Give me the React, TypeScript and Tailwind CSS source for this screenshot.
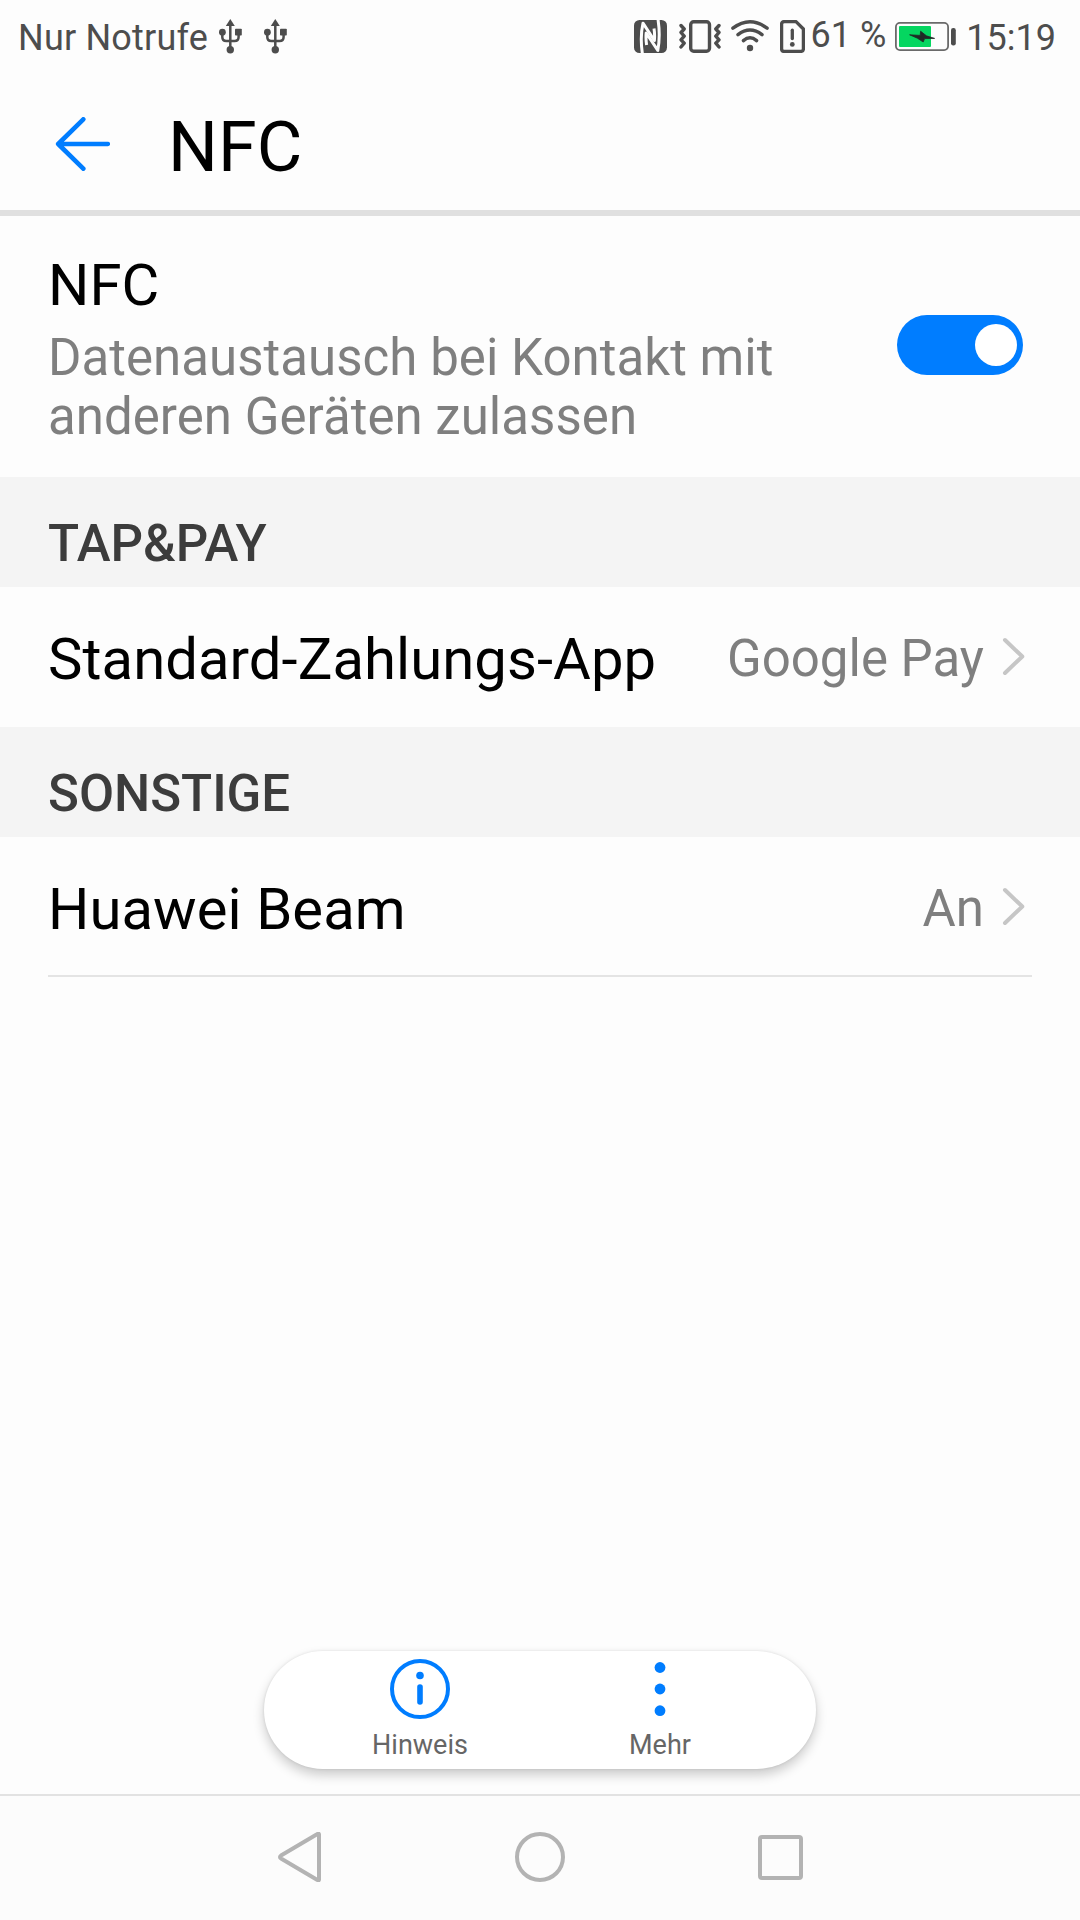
import type { ReactNode } from "react"

const UsbIcon = () => (
  <svg width="23" height="35" viewBox="0 0 23 35" fill="#4d4d4d">
    <path d="M11.3 0 L15.8 7 H6.8 Z" />
    <circle cx="3.4" cy="13.2" r="3.4" />
    <rect x="16" y="9.8" width="6.8" height="6.8" rx="0.8" />
    <circle cx="11.3" cy="30.8" r="3.7" />
    <path d="M11.3 5 V29 M3.3 14 V18 Q3.3 22 7.3 22 H15.6 Q19.6 22 19.6 18 V14" fill="none" stroke="#4d4d4d" strokeWidth="2.5" />
  </svg>
)

const NfcIcon = () => (
  <svg width="33" height="33" viewBox="0 0 33 33">
    <rect width="33" height="33" rx="5.5" fill="#4d4d4d" />
    <path d="M8.6 35 C6.8 24 7 12 9 3.2 L20.4 20.5 C20.8 16 20.6 12 20 8.5" fill="none" stroke="#fdfdfd" strokeWidth="3" strokeLinejoin="round" />
    <path d="M23.8 -2 C25.6 9 25.6 21 23.8 30.4 L12.2 13 C11.8 17 12 21 12.6 25" fill="none" stroke="#fdfdfd" strokeWidth="3" strokeLinejoin="round" />
  </svg>
)

const VibrateIcon = () => (
  <svg width="42" height="33" viewBox="0 0 42 33" fill="none" stroke="#4d4d4d" strokeWidth="3.4" strokeLinecap="round" strokeLinejoin="round">
    <rect x="11.7" y="1.8" width="18.8" height="29.4" rx="3" />
    <path d="M2 5.5 L5.2 9 L2 12.5 L5.2 16.2 L2 19.8 L5.2 23.2 L2 27" />
    <path d="M40 5.5 L36.8 9 L40 12.5 L36.8 16.2 L40 19.8 L36.8 23.2 L40 27" />
  </svg>
)

const WifiIcon = () => (
  <svg width="38" height="33" viewBox="0 0 38 33" fill="none" stroke="#4d4d4d" strokeWidth="3.5" strokeLinecap="round">
    <path d="M1.9 8.2 Q19 -4.6 36.1 8.2" />
    <path d="M7 14.6 Q19 5.4 31 14.6" />
    <path d="M12.4 20.6 Q19 15 25.6 20.6" />
    <circle cx="19" cy="28" r="3.2" fill="#4d4d4d" stroke="none" />
  </svg>
)

const SimAlertIcon = () => (
  <svg width="25" height="33" viewBox="0 0 25 33" fill="none" stroke="#4d4d4d" strokeWidth="3.3" strokeLinejoin="round">
    <path d="M4.5 1.6 H16 L23.4 9 V29 Q23.4 31.4 21 31.4 H4 Q1.6 31.4 1.6 29 V4 Q1.6 1.6 4.5 1.6 Z" />
    <path d="M12.3 10.2 V18.6" strokeLinecap="round" />
    <circle cx="12.3" cy="24.4" r="2.4" fill="#4d4d4d" stroke="none" />
  </svg>
)

const BatteryIcon = () => (
  <svg width="62" height="29" viewBox="0 0 62 29">
    <rect x="0.9" y="0.9" width="52.2" height="27.2" rx="4" fill="none" stroke="#6a6a6a" strokeWidth="1.8" />
    <rect x="4" y="4" width="32" height="21" rx="1" fill="#05d660" />
    <path d="M14.6 12.8 L25.2 13.4 L25.6 9.2 L31.4 13.8 L39.6 16.4 L29.6 16.6 L28.2 20 L22.4 16.2 Z" fill="#202a26" stroke="#202a26" strokeWidth="0.8" />
    <rect x="56" y="6" width="4.8" height="17.5" rx="2.2" fill="#4d4d4d" />
  </svg>
)

const ChevronIcon = () => (
  <svg className="-mt-1" width="24" height="40" viewBox="0 0 24 40" fill="none" stroke="#c6c6c6" strokeWidth="4" strokeLinecap="round" strokeLinejoin="round">
    <path d="M4 3 L21.3 19.5 L4 36" />
  </svg>
)

const SectionHeader = ({ children }: { children: ReactNode }) => (
  <h3 className="h-[110px] bg-[#f4f4f4] px-12 pt-[37px] text-[51px] leading-[60px] font-medium text-[#3c3c3c]">
    {children}
  </h3>
)

const SettingRow = ({ label, value }: { label: string; value: string }) => (
  <div className="flex h-[138px] items-center px-12 pt-1.5">
    <span className="flex-1 text-[58px] leading-[68px] tracking-[0.06px] text-black">{label}</span>
    <span className="mr-[17px] text-[51px] leading-[60px] text-[#7f7f7f]">{value}</span>
    <ChevronIcon />
    <span className="w-[7px]" />
  </div>
)

function StatusBar() {
  return (
    <div className="flex h-[75px] items-center pl-[18px] pr-[24px] text-[36px] leading-[42px] text-[#4d4d4d]">
      <span className="tracking-[0.2px]">Nur Notrufe</span>
      <div className="ml-[11px] flex gap-[22px] pb-0.5">
        <UsbIcon />
        <UsbIcon />
      </div>
      <div className="ml-auto flex items-center pb-0.5">
        <NfcIcon />
        <span className="w-3" />
        <VibrateIcon />
        <span className="w-[10px]" />
        <WifiIcon />
        <span className="w-[11px]" />
        <SimAlertIcon />
        <span className="ml-[6px] pb-[3px] text-[36px]">61 %</span>
        <span className="w-[9px]" />
        <BatteryIcon />
      </div>
      <span className="ml-[9px]">15:19</span>
    </div>
  )
}

function ActionPill() {
  return (
    <div className="mx-auto mt-auto mb-[25px] flex h-[118px] w-[552px] justify-center rounded-full bg-white shadow-[0_6px_12px_rgba(0,0,0,0.2),0_0_3px_rgba(0,0,0,0.1)]">
      <button className="flex w-[240px] flex-col items-center pt-2 text-[27px] leading-8 text-[#666666]">
        <svg width="60" height="60" viewBox="0 0 60 60" fill="none" stroke="#007dff">
          <circle cx="30" cy="30" r="28" strokeWidth="4" />
          <circle cx="30" cy="16.5" r="3.8" fill="#007dff" stroke="none" />
          <path d="M30 28 V43" strokeWidth="5.6" strokeLinecap="round" />
        </svg>
        <span className="mt-[10px]">Hinweis</span>
      </button>
      <button className="flex w-[240px] flex-col items-center pt-2 text-[27px] leading-8 text-[#666666]">
        <svg width="60" height="60" viewBox="0 0 60 60" fill="#007dff">
          <circle cx="30" cy="8.5" r="5.4" />
          <circle cx="30" cy="30" r="5.4" />
          <circle cx="30" cy="51.7" r="5.4" />
        </svg>
        <span className="mt-[10px]">Mehr</span>
      </button>
    </div>
  )
}

function NavBar() {
  return (
    <div className="flex h-[126px] items-center justify-center border-t-2 border-[#e2e2e2] bg-[#fcfcfc] pb-0.5">
      <div className="flex w-[240px] justify-center">
        <svg width="50" height="50" viewBox="0 0 50 50" fill="none" stroke="#b3b3b3" strokeWidth="4" strokeLinejoin="round">
          <path d="M44 2.5 V47.5 Q44 49 42 47.7 L6 26.5 Q4 25 6 23.5 L42 2.3 Q44 1 44 2.5 Z" />
        </svg>
      </div>
      <div className="flex w-[240px] justify-center">
        <div className="size-[50px] rounded-full border-4 border-[#b3b3b3]" />
      </div>
      <div className="flex w-[240px] justify-center">
        <div className="size-[45px] rounded-[4px] border-4 border-[#b3b3b3]" />
      </div>
    </div>
  )
}

export default function App() {
  return (
    <div className="flex h-[1920px] w-[1080px] flex-col overflow-hidden bg-[#fdfdfd] font-['Roboto',sans-serif]">
      <StatusBar />

      {/* Title bar */}
      <header className="flex h-[141px] items-center border-b-[6px] border-[#e0e0e0] pl-[55px]">
        <svg className="mt-[3px]" width="55" height="54" viewBox="0 0 55 54" fill="none" stroke="#007dff" strokeWidth="4.6" strokeLinecap="round" strokeLinejoin="round">
          <path d="M28.3 2.3 L3.2 27 L28.3 51.7 M3.2 27 H52.8" />
        </svg>
        <h1 className="ml-[58px] pt-[9px] text-[70px] leading-[82px] text-black">NFC</h1>
      </header>

      {/* NFC toggle */}
      <div className="flex h-[261px] justify-between pl-12 pr-[57px]">
        <div className="w-[760px] pt-[35px]">
          <h2 className="text-[58px] leading-[68px] text-black">NFC</h2>
          <p className="mt-[9px] text-[51px] leading-[59px] tracking-[0.04px] text-[#7f7f7f]">
            Datenaustausch bei Kontakt mit anderen Geräten zulassen
          </p>
        </div>
        <button role="switch" aria-checked="true" className="mt-[99px] flex h-[60px] w-[126px] items-center justify-end rounded-full bg-[#007dff] pr-1.5">
          <span className="size-[42px] rounded-full bg-white" />
        </button>
      </div>

      <SectionHeader>TAP&amp;PAY</SectionHeader>
      <div className="pb-0.5">
        <SettingRow label="Standard-Zahlungs-App" value="Google Pay" />
      </div>

      <SectionHeader>SONSTIGE</SectionHeader>
      <SettingRow label="Huawei Beam" value="An" />
      <div className="mx-12 h-0.5 bg-[#e4e4e4]" />

      <ActionPill />
      <NavBar />
    </div>
  )
}
